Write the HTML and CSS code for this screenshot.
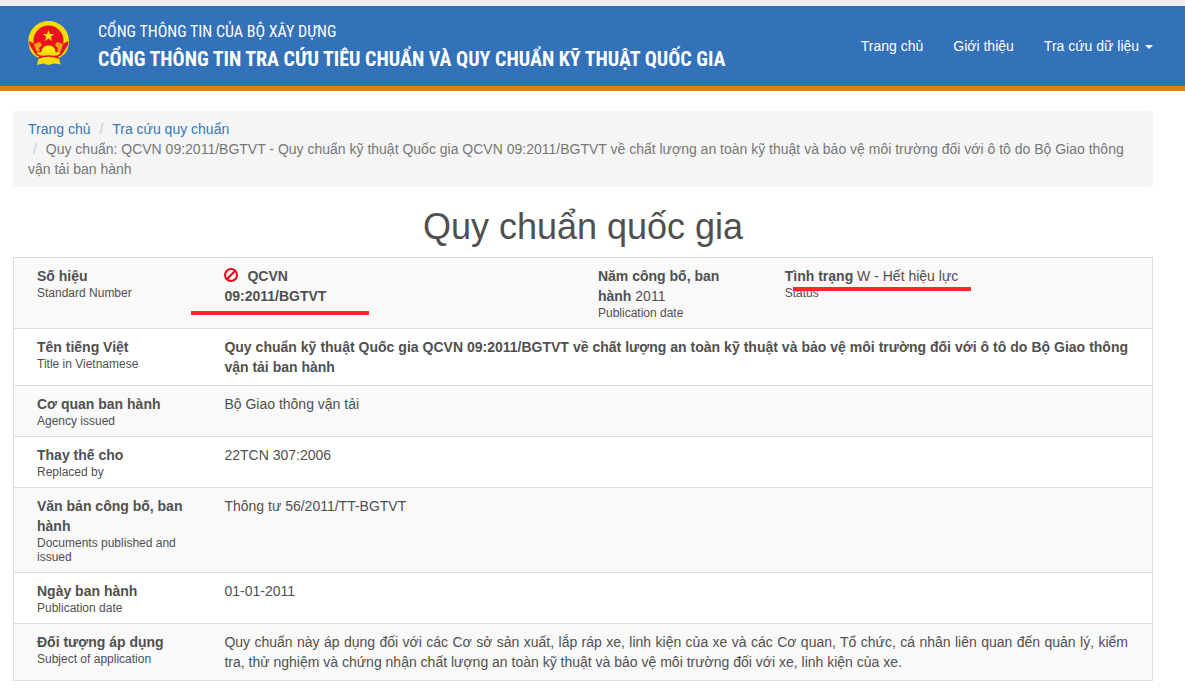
FILE: index.html
```html
<!DOCTYPE html>
<html lang="vi">
<head>
    <meta charset="UTF-8">
    <meta name="viewport" content="width=device-width, initial-scale=1.0">
    <title>Quy chuẩn quốc gia</title>
    <link rel="stylesheet" href="styles.css">
</head>
<body>
    <header class="navbar">
        <a class="brand" href="#">
            <svg class="logo" viewBox="0 0 42 46" aria-hidden="true">
                <!-- vành lúa -->
                <path d="M20.500 1 C31 1 41 9 41 21 C41 30 37 35 31 38 L32.500 44.500 L26 43.500 L20.500 45 L15 43.500 L9 45 L10.500 38 C4 35 0.500 30 0.500 21 C0.500 9 10 1 20.500 1 Z" fill="#f3dc0a"/>
                <circle cx="20.500" cy="20.500" r="15" fill="#e8141c"/>
                <!-- dải lụa -->
                <path d="M1 21 L7 24 L10 33 L16 36 L14 38 L8 35 L4 29 L1.500 25 Z" fill="#e8141c"/>
                <path d="M40.500 21 L34.500 24 L31.500 33 L25.500 36 L27.500 38 L33.500 35 L37.500 29 L40 25 Z" fill="#e8141c"/>
                <path d="M6 24 L12 22 L14 25 L11 28 L12 31 L8 31 Z" fill="#eba313"/>
                <path d="M35 24 L29 22 L27 25 L30 28 L29 31 L33 31 Z" fill="#eba313"/>
                <!-- ngôi sao -->
                <path d="M20.500 10 L21.900 14 L26.200 14.100 L22.800 16.700 L24 20.900 L20.500 18.400 L17 20.900 L18.200 16.700 L14.800 14.100 L19.100 14 Z" fill="#fbe30d"/>
                <!-- bánh răng -->
                <path d="M13.500 32.500 C13.500 28 16.500 25.500 20.500 25.500 C24.500 25.500 27.500 28 27.500 32.500 Z" fill="#fbe80d"/>
                <path d="M8 33 L13 32 H28 L33 33 L29 35.500 H12 Z" fill="#f3dc0a"/>
                <path d="M10 38 Q20.500 34 31 38" fill="none" stroke="#e8141c" stroke-width="1.500"/>
            </svg>
            <span class="brand-text">
                <span class="brand-sub">CỔNG THÔNG TIN CỦA BỘ XÂY DỰNG</span>
                <span class="brand-title">CỔNG THÔNG TIN TRA CỨU TIÊU CHUẨN VÀ QUY CHUẨN KỸ THUẬT QUỐC GIA</span>
            </span>
        </a>
        <nav class="menu">
            <a href="#">Trang chủ</a>
            <a href="#">Giới thiệu</a>
            <a href="#">Tra cứu dữ liệu <span class="caret"></span></a>
        </nav>
    </header>

    <main class="container">
        <ol class="breadcrumb">
            <li><a href="#">Trang chủ</a></li>
            <li><a href="#">Tra cứu quy chuẩn</a></li>
            <li class="active">Quy chuẩn: QCVN 09:2011/BGTVT - Quy chuẩn kỹ thuật Quốc gia QCVN 09:2011/BGTVT về chất lượng an toàn kỹ thuật và bảo vệ môi trường đối với ô tô do Bộ Giao thông vận tải ban hành</li>
        </ol>

        <h1>Quy chuẩn quốc gia</h1>

        <table class="detail">
            <colgroup>
                <col class="col-label">
                <col class="col-small">
                <col class="col-small">
                <col class="col-small">
                <col>
            </colgroup>
            <tr>
                <th scope="row">Số hiệu <small>Standard Number</small></th>
                <td class="marked mark-number">
                    <strong><svg class="ban" viewBox="0 0 14 14" aria-hidden="true"><circle cx="7" cy="7" r="6"/><path d="M2.800 11.200 L11.200 2.800"/></svg>QCVN 09:2011/BGTVT</strong>
                </td>
                <td></td>
                <td><strong>Năm công bố, ban hành</strong> 2011 <small>Publication date</small></td>
                <td class="marked mark-status"><strong>Tình trạng</strong> W - Hết hiệu lực <small>Status</small></td>
            </tr>
            <tr>
                <th scope="row">Tên tiếng Việt <small>Title in Vietnamese</small></th>
                <td class="text" colspan="4"><strong>Quy chuẩn kỹ thuật Quốc gia QCVN 09:2011/BGTVT về chất lượng an toàn kỹ thuật và bảo vệ môi trường đối với ô tô do Bộ Giao thông vận tải ban hành</strong></td>
            </tr>
            <tr>
                <th scope="row">Cơ quan ban hành <small>Agency issued</small></th>
                <td class="text" colspan="4">Bộ Giao thông vận tải</td>
            </tr>
            <tr>
                <th scope="row">Thay thế cho <small>Replaced by</small></th>
                <td class="text" colspan="4">22TCN 307:2006</td>
            </tr>
            <tr>
                <th scope="row">Văn bản công bố, ban hành <small>Documents published and issued</small></th>
                <td class="text" colspan="4">Thông tư 56/2011/TT-BGTVT</td>
            </tr>
            <tr>
                <th scope="row">Ngày ban hành <small>Publication date</small></th>
                <td class="text" colspan="4">01-01-2011</td>
            </tr>
            <tr>
                <th scope="row">Đối tượng áp dụng <small>Subject of application</small></th>
                <td class="text" colspan="4">Quy chuẩn này áp dụng đối với các Cơ sở sản xuất, lắp ráp xe, linh kiện của xe và các Cơ quan, Tổ chức, cá nhân liên quan đến quản lý, kiểm tra, thử nghiệm và chứng nhận chất lượng an toàn kỹ thuật và bảo vệ môi trường đối với xe, linh kiện của xe.</td>
            </tr>
        </table>
    </main>
</body>
</html>
```
FILE: styles.css
```css
* {
    box-sizing: border-box;
}
body {
    margin: 0;
    font-family: "Liberation Sans", Arial, sans-serif;
    font-size: 14px;
    line-height: 20px;
    color: #505050;
    background-color: #fff;
}
a {
    color: #337ab7;
    text-decoration: none;
}

/* Header */
.navbar {
    display: flex;
    justify-content: space-between;
    align-items: center;
    min-height: 91px;
    padding: 0 32px 0 28px;
    background-color: #3371b9;
    border-top: 6px solid #eeeff1;
    border-bottom: 5px solid #df810f;
}
.brand {
    display: flex;
    align-items: center;
    gap: 28px;
    color: #fff;
}
.logo {
    width: 42px;
    height: 46px;
    margin-bottom: 6px;
    flex-shrink: 0;
}
.brand-text {
    display: flex;
    flex-direction: column;
    font-family: "Roboto Condensed", Roboto, sans-serif;
}
.brand-sub {
    font-size: 16px;
    line-height: 26px;
}
.brand-title {
    font-size: 20px;
    line-height: 28px;
    font-weight: bold;
}
.menu {
    display: flex;
    gap: 30px;
    white-space: nowrap;
}
.menu a {
    color: #fff;
}
.caret {
    display: inline-block;
    margin-left: 2px;
    vertical-align: middle;
    border-top: 4px solid #fff;
    border-left: 4px solid transparent;
    border-right: 4px solid transparent;
}

/* Content */
.container {
    padding: 20px 32px 20px 13px;
}
.breadcrumb {
    margin: 0 0 20px;
    padding: 8px 15px;
    list-style: none;
    background-color: #f5f5f5;
    border-radius: 4px;
}
.breadcrumb li {
    display: inline-block;
}
.breadcrumb li + li::before {
    content: "/\00a0";
    padding: 0 5px;
    color: #ccc;
}
.breadcrumb .active {
    color: #777;
}
h1 {
    margin: 0 0 10px;
    font-size: 36px;
    line-height: 40px;
    font-weight: normal;
    text-align: center;
}

/* Detail table */
.detail {
    width: 100%;
    table-layout: fixed;
    border-collapse: collapse;
    border: 1px solid #ddd;
}
.col-label {
    width: 17.2%;
}
.col-small {
    width: 16.4%;
}
.detail tr:nth-child(odd) {
    background-color: #f9f9f9;
}
.detail th,
.detail td {
    padding: 8px 15px;
    border-top: 1px solid #ddd;
    text-align: left;
    vertical-align: top;
}
.detail th {
    padding-left: 23px;
}
.detail .text {
    padding-right: 24px;
    text-align: justify;
}
small {
    display: block;
    font-size: 12px;
    line-height: 14px;
    font-weight: normal;
}
.ban {
    width: 14px;
    height: 14px;
    margin-right: 9px;
    vertical-align: -1px;
    fill: none;
    stroke: #f00018;
    stroke-width: 2;
}

/* Red marker lines */
.marked {
    position: relative;
}
.marked::after {
    content: "";
    position: absolute;
    width: 178px;
    height: 4px;
    background-color: #fe2828;
}
.mark-number::after {
    top: 53px;
    left: -18px;
}
.mark-status::after {
    top: 29px;
    left: 23px;
}
```
